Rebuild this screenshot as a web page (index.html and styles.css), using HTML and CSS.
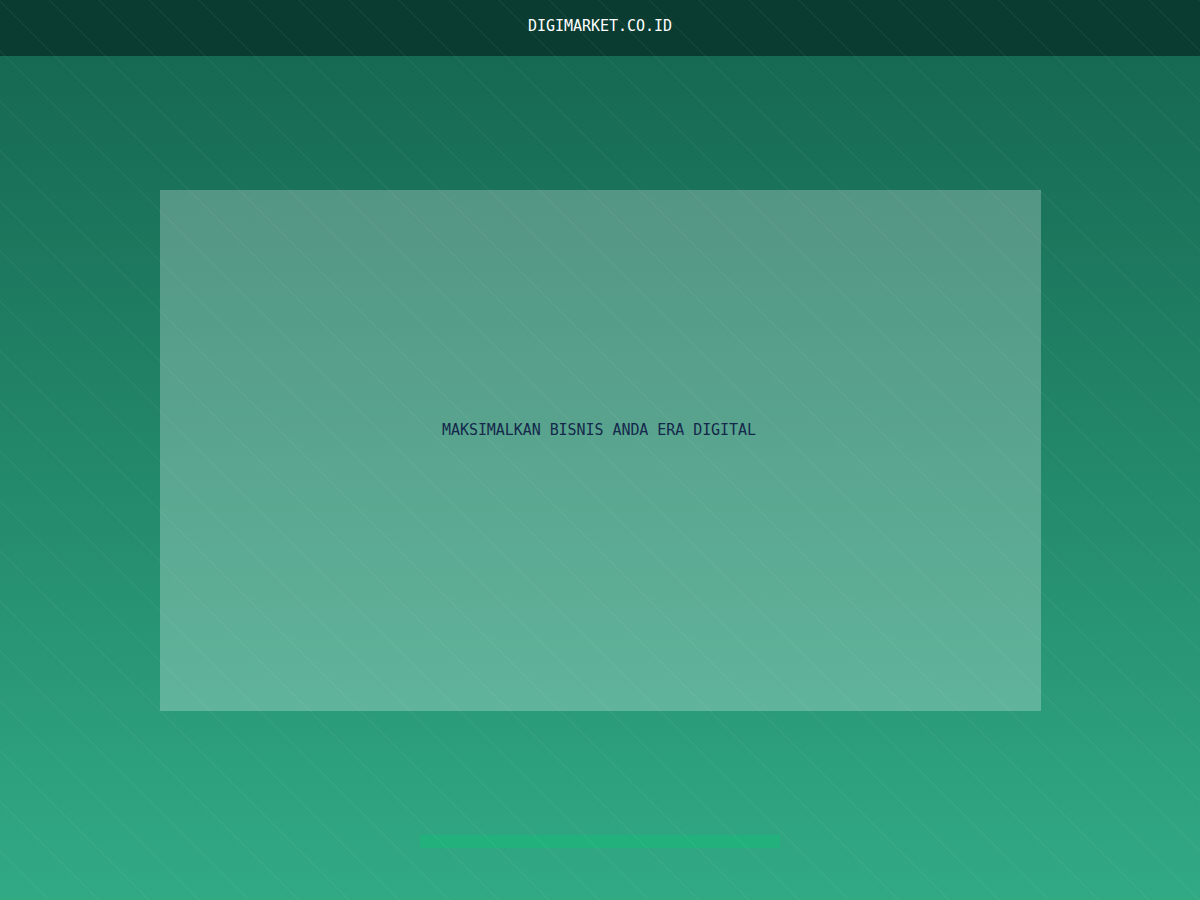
FILE: index.html
```html
<!DOCTYPE html>
<html lang="id">
<head>
<meta charset="utf-8">
<title>DIGIMARKET.CO.ID</title>
<link rel="stylesheet" href="styles.css">
</head>
<body>
  <header class="topbar">
    <span class="brand">DIGIMARKET.CO.ID</span>
  </header>
  <main class="stage">
    <section class="hero">
      <h1 class="hero-title">MAKSIMALKAN BISNIS ANDA ERA DIGITAL</h1>
    </section>
    <div class="progress"></div>
  </main>
</body>
</html>
```
FILE: styles.css
```css
html, body {
  margin: 0;
  padding: 0;
}

body {
  min-height: 900px;
  font-family: "DejaVu Sans Mono", "Liberation Mono", monospace;
  background: linear-gradient(180deg, #14644f 0%, #31aa84 100%);
  position: relative;
}

/* thin diagonal pinstripes laid over the whole page */
body::after {
  content: "";
  position: fixed;
  inset: 0;
  pointer-events: none;
  background: repeating-linear-gradient(
    45deg,
    rgba(255, 255, 255, 0) 0px,
    rgba(255, 255, 255, 0) 34.3px,
    rgba(255, 255, 255, 0.08) 34.6px,
    rgba(255, 255, 255, 0.08) 35.1px,
    rgba(255, 255, 255, 0) 35.355px
  );
}

.topbar {
  height: 56px;
  box-sizing: border-box;
  padding-bottom: 4px;
  background: #0a3c32;
  display: flex;
  align-items: center;
  justify-content: center;
}

.brand {
  color: #ffffff;
  font-size: 15px;
  letter-spacing: -0.03px;
}

.stage {
  display: flex;
  flex-direction: column;
  align-items: center;
}

.hero {
  margin-top: 134px;
  width: 881px;
  height: 521px;
  background: rgba(255, 255, 255, 0.25);
  display: flex;
  align-items: center;
  justify-content: center;
}

.hero-title {
  margin: 0 2px 41px 0;
  font-size: 15px;
  font-weight: normal;
  letter-spacing: -0.06px;
  color: #13284a;
}

.progress {
  margin-top: 124px;
  width: 360px;
  height: 13px;
  background: #22b07c;
}
```
